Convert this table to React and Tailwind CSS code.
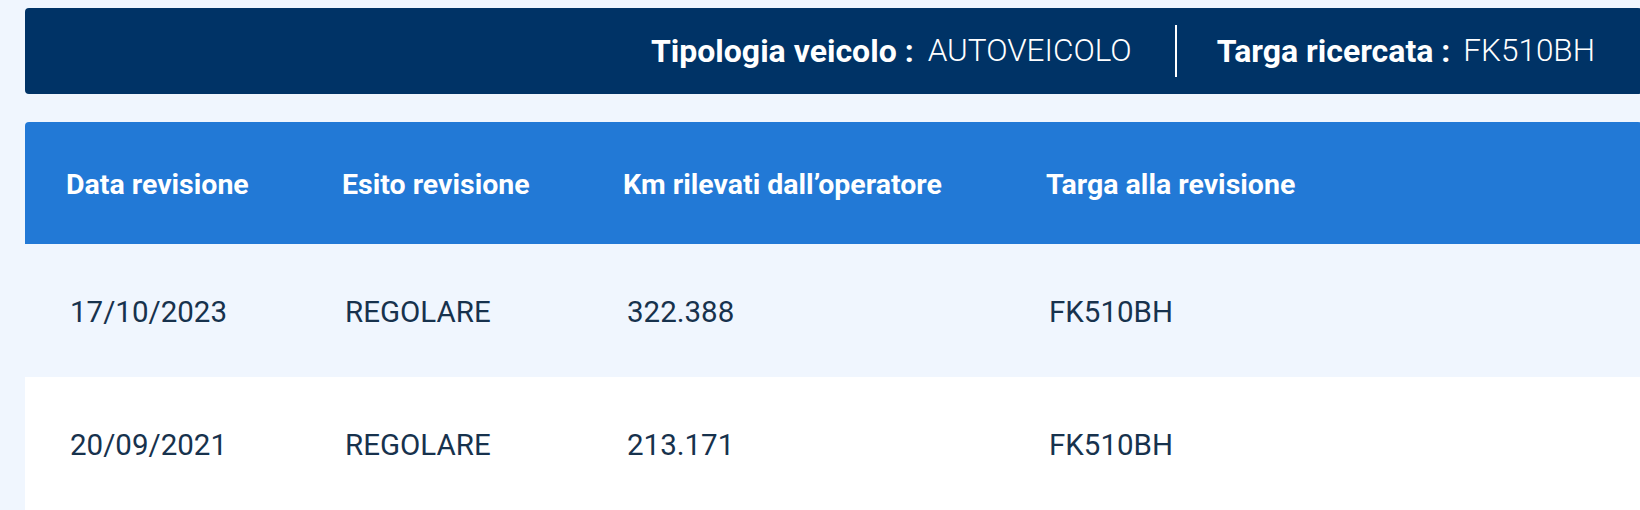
import React from 'react';

const columns = ['Data revisione', 'Esito revisione', 'Km rilevati dall’operatore', 'Targa alla revisione'];

const revisioni = [
  { data: '17/10/2023', esito: 'REGOLARE', km: '322.388', targa: 'FK510BH' },
  { data: '20/09/2021', esito: 'REGOLARE', km: '213.171', targa: 'FK510BH' },
];

const gridCols = 'grid grid-cols-[276px_281px_423px_1fr] items-center pl-[41px]';

export default function App() {
  return (
    <div className="min-h-screen w-full overflow-hidden bg-[#F0F6FE] pt-[8px] pl-[25px] font-['Roboto','Open_Sans',sans-serif]">
      <div className="w-[1617px]">
        {/* Vehicle summary */}
        <div className="flex h-[86px] items-center justify-end rounded-[4px] bg-[#003366] pr-[47px] leading-none text-white">
          <span className="text-[32px] font-bold">Tipologia veicolo :</span>
          <span className="ml-[14px] text-[31.5px] font-light">AUTOVEICOLO</span>
          <span className="ml-[43px] mr-[40px] h-[52px] w-[2px] bg-white" />
          <span className="text-[32px] font-bold">Targa ricercata :</span>
          <span className="ml-[13px] text-[31.5px] font-light">FK510BH</span>
        </div>

        {/* Revisions table */}
        <div className="mt-[28px] overflow-hidden rounded-t-[4px]">
          <div className={`${gridCols} h-[122px] bg-[#2279D6] pt-[4px] text-[28.5px] font-bold leading-none text-white`}>
            {columns.map((c) => (
              <div key={c}>{c}</div>
            ))}
          </div>
          {revisioni.map((r, i) => (
            <div
              key={r.data}
              className={`${gridCols} h-[133px] pt-[4px] text-[29.5px] leading-none text-[#17324D] ${i % 2 === 0 ? 'bg-[#F0F6FE]' : 'bg-white'}`}
            >
              <div className="pl-[4px]">{r.data}</div>
              <div className="pl-[3px]">{r.esito}</div>
              <div className="pl-[4px]">{r.km}</div>
              <div className="pl-[3px]">{r.targa}</div>
            </div>
          ))}
        </div>
      </div>
    </div>
  );
}
